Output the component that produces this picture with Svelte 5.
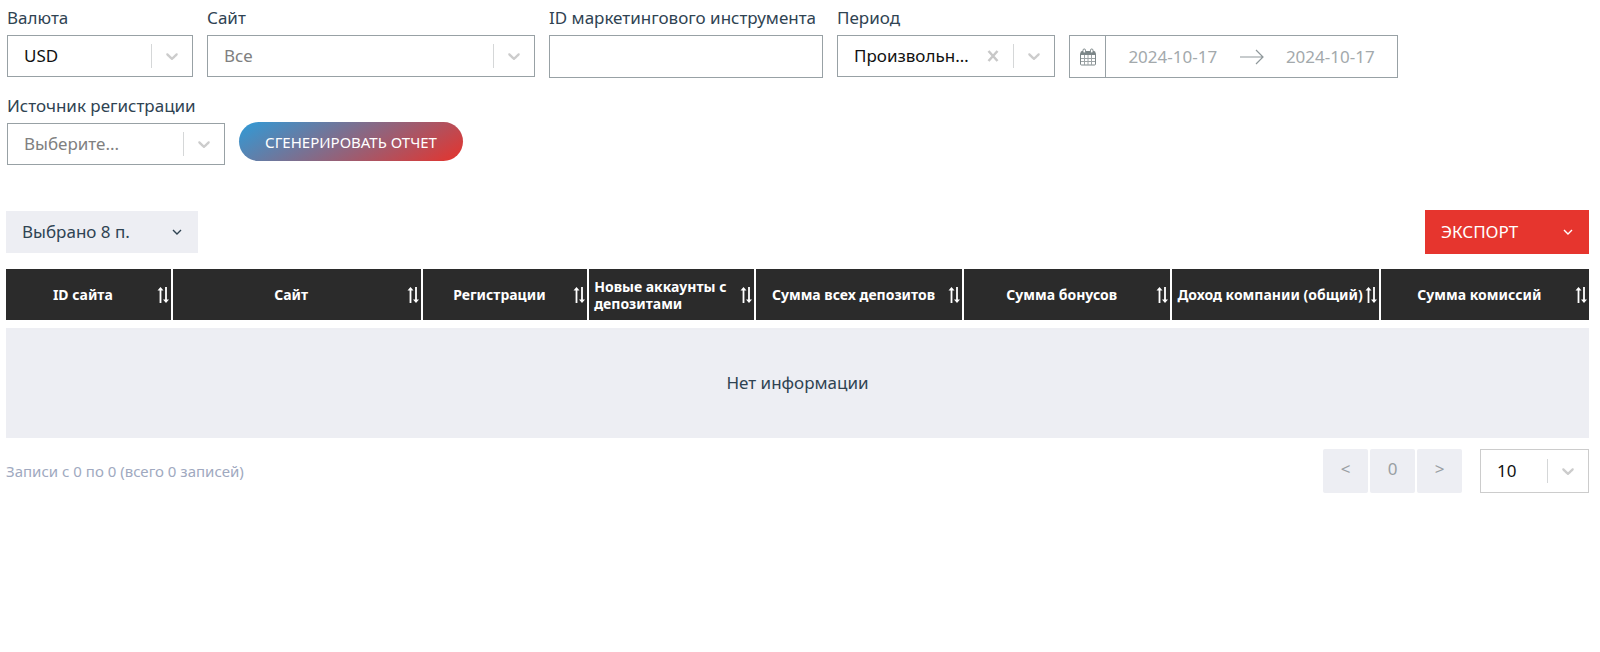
<script lang="ts">
	const columns = [
		{ title: 'ID сайта', span: 4 },
		{ title: 'Сайт', span: 6 },
		{ title: 'Регистрации', span: 4 },
		{ title: 'Новые аккаунты с депозитами', span: 4 },
		{ title: 'Сумма всех депозитов', span: 5 },
		{ title: 'Сумма бонусов', span: 5 },
		{ title: 'Доход компании (общий)', span: 5 },
		{ title: 'Сумма комиссий', span: 5 }
	];
	const total = columns.reduce((sum, column) => sum + column.span, 0);

	let period = $state('custom');
	let instrument = $state('');
	let dateFrom = $state('2024-10-17');
	let dateTo = $state('2024-10-17');
</script>

{#snippet indicator()}
	<span class="indicator">
		<svg width="20" height="20" viewBox="0 0 20 20" aria-hidden="true">
			<path
				d="M4.516 7.548c0.436-0.446 1.043-0.481 1.576 0l3.908 3.747 3.908-3.747c0.533-0.481 1.141-0.446 1.574 0 0.436 0.445 0.408 1.197 0 1.615-0.406 0.418-4.695 4.502-4.695 4.502-0.217 0.223-0.502 0.335-0.787 0.335s-0.57-0.112-0.789-0.335c0 0-4.287-4.084-4.695-4.502s-0.436-1.17 0-1.615z"
			/>
		</svg>
	</span>
{/snippet}

{#snippet arrow()}
	<svg width="10" height="8" viewBox="0 0 10 8" aria-hidden="true">
		<path d="M1 2l4 4 4-4" fill="none" stroke="currentColor" stroke-width="1.4" />
	</svg>
{/snippet}

<main>
	<form class="filters" onsubmit={(e) => e.preventDefault()}>
		<div class="field currency">
			<label for="currency">Валюта</label>
			<div class="select">
				<select id="currency">
					<option>USD</option>
				</select>
				{@render indicator()}
			</div>
		</div>

		<div class="field site">
			<label for="site">Сайт</label>
			<div class="select">
				<select id="site" class="empty">
					<option>Все</option>
				</select>
				{@render indicator()}
			</div>
		</div>

		<div class="field instrument">
			<label for="instrument">ID маркетингового инструмента</label>
			<input id="instrument" type="text" bind:value={instrument} />
		</div>

		<div class="field">
			<label for="period">Период</label>
			<div class="select clearable">
				<select id="period" bind:value={period}>
					<option value="">Выберите...</option>
					<option value="custom">Произвольный период</option>
				</select>
				<button type="button" class="clear" aria-label="Очистить" onclick={() => (period = '')}>
					<svg width="12" height="12" viewBox="0 0 12 12" aria-hidden="true">
						<path d="M1.5 1l9 10M10.5 1l-9 10" fill="none" stroke="#c8c8c8" stroke-width="2.5" />
					</svg>
				</button>
				{@render indicator()}
			</div>
		</div>

		<div class="dates">
			<button type="button" class="calendar" aria-label="Календарь">
				<svg width="16" height="18" viewBox="0 0 16 18" aria-hidden="true">
					<path d="M2 3h12a1.5 1.5 0 0 1 1.5 1.5V7H.5V4.5A1.5 1.5 0 0 1 2 3z" fill="#7d8789" />
					<rect x="0.5" y="5" width="15" height="12" rx="1" fill="none" stroke="#7d8789" />
					<path d="M4.5 7v10M8 7v10M11.5 7v10M1 10.5h14M1 13.5h14" stroke="#9da4a6" />
					<rect x="3" y="1" width="2.5" height="4" rx="1.2" fill="#fff" stroke="#7d8789" />
					<rect x="10.5" y="1" width="2.5" height="4" rx="1.2" fill="#fff" stroke="#7d8789" />
				</svg>
			</button>
			<input type="text" aria-label="Дата начала" bind:value={dateFrom} />
			<svg width="24" height="16" viewBox="0 0 24 16" aria-hidden="true">
				<path d="M0 8h23M16 1l7 7-7 7" fill="none" stroke="#8f989b" stroke-width="1.2" />
			</svg>
			<input type="text" aria-label="Дата окончания" bind:value={dateTo} />
		</div>

		<div class="field">
			<label for="source">Источник регистрации</label>
			<div class="select">
				<select id="source" class="empty">
					<option>Выберите...</option>
				</select>
				{@render indicator()}
			</div>
		</div>

		<button type="submit" class="generate">СГЕНЕРИРОВАТЬ ОТЧЕТ</button>
	</form>

	<div class="toolbar">
		<button type="button" class="columns">Выбрано 8 п. {@render arrow()}</button>
		<button type="button" class="export">ЭКСПОРТ {@render arrow()}</button>
	</div>

	<table>
		<colgroup>
			{#each columns as column}
				<col style="width: {(column.span / total) * 100}%" />
			{/each}
		</colgroup>
		<thead>
			<tr>
				{#each columns as column}
					<th>
						<div class="head">
							<span>{column.title}</span>
							<svg width="12" height="18" viewBox="0 0 12 18" aria-hidden="true">
								<path d="M3.5 17V3M9 1v14" stroke="#fff" stroke-width="1.8" />
								<path d="M3.5 1L.5 4.5h6zM9 17l-3-3.5h6z" fill="#fff" />
							</svg>
						</div>
					</th>
				{/each}
			</tr>
		</thead>
		<tbody>
			<tr>
				<td colspan={columns.length}>Нет информации</td>
			</tr>
		</tbody>
	</table>

	<footer>
		<p>Записи с 0 по 0 (всего 0 записей)</p>
		<nav aria-label="Страницы">
			<button type="button" disabled>&lt;</button>
			<button type="button" disabled>0</button>
			<button type="button" disabled>&gt;</button>
		</nav>
		<div class="select size">
			<select aria-label="Записей на странице">
				<option>10</option>
			</select>
			{@render indicator()}
		</div>
	</footer>
</main>

<style>
	:global(body) {
		background: #fff;
		color: #2f4352;
		font-family: 'Noto Sans', 'Open Sans', sans-serif;
		font-size: 17px;
		line-height: 24px;
	}

	main {
		padding: 6px 11px 6px 6px;
	}

	main :global(*) {
		box-sizing: border-box;
	}

	button,
	input,
	select {
		margin: 0;
		padding: 0;
		border: 0;
		border-radius: 0;
		background: none;
		color: inherit;
		font: inherit;
	}

	button {
		cursor: pointer;
	}

	svg {
		display: block;
		flex: none;
	}

	.filters {
		display: flex;
		flex-wrap: wrap;
		align-items: flex-start;
		gap: 16px 14px;
		padding-left: 1px;
	}

	.field {
		display: flex;
		flex-direction: column;
		gap: 5px;
		width: 218px;
	}

	.field.currency {
		width: 186px;
	}

	.field.site {
		width: 328px;
	}

	.field.instrument {
		width: 274px;
	}

	label {
		white-space: nowrap;
	}

	.field > input {
		height: 43px;
		padding: 0 16px;
		border: 1px solid #98a1a5;
	}

	.select {
		display: grid;
		grid-template-columns: 1fr auto auto;
		align-items: center;
		height: 42px;
		border: 1px solid #98a1a5;
	}

	/* the native control lies under the indicator so the whole box opens it */
	.select select {
		grid-area: 1 / 1 / 2 / 4;
		width: 100%;
		height: 100%;
		padding: 0 46px 0 16px;
		appearance: none;
		color: #111;
		text-overflow: ellipsis;
		white-space: nowrap;
		overflow: hidden;
	}

	.select select.empty {
		color: #808080;
	}

	.clearable select {
		padding-right: 76px;
	}

	.clear {
		grid-area: 1 / 2;
		padding: 8px 14px;
	}

	.indicator {
		grid-area: 1 / 3;
		display: flex;
		align-items: center;
		height: 24px;
		padding: 0 10px;
		border-left: 1px solid #d5d7d8;
		fill: #ccc;
		pointer-events: none;
	}

	.dates {
		display: flex;
		align-items: center;
		width: 329px;
		height: 43px;
		margin-top: 29px;
		border: 1px solid #98a1a5;
		color: #a3a9ac;
	}

	.dates input {
		flex: 1;
		min-width: 0;
		text-align: center;
	}

	.calendar {
		display: grid;
		place-items: center;
		width: 36px;
		height: 100%;
		border-right: 1px solid #98a1a5;
	}

	.generate {
		width: 224px;
		height: 39px;
		margin-top: 28px;
		border-radius: 20px;
		background: linear-gradient(150deg, #2f9bd8, #e6332c);
		color: #fff;
		font-size: 15px;
	}

	.toolbar {
		display: flex;
		justify-content: space-between;
		align-items: center;
		margin: 45px 0 15px;
	}

	.toolbar button {
		display: flex;
		justify-content: space-between;
		align-items: center;
		padding: 0 16px;
	}

	.columns {
		width: 192px;
		height: 42px;
		background: #edeef3;
	}

	.export {
		width: 164px;
		height: 44px;
		background: #e6352e;
		color: #fff;
	}

	table {
		width: 100%;
		border-collapse: separate;
		border-spacing: 0;
		table-layout: fixed;
	}

	th {
		height: 51px;
		padding: 0;
		border-right: 2px solid #fff;
		background: #2b2b2b;
		color: #fff;
		font-size: 14px;
		line-height: 17px;
		text-align: left;
	}

	th:last-child {
		border-right: 0;
	}

	.head {
		display: flex;
		align-items: center;
		gap: 2px;
		padding: 0 2px 0 5px;
	}

	.head span {
		display: flex;
		flex: 1;
		justify-content: center;
	}

	td {
		height: 118px;
		padding: 0;
		border-top: 8px solid #fff;
		background: #edeef3;
		text-align: center;
	}

	footer {
		display: flex;
		align-items: center;
		margin-top: 11px;
	}

	p {
		margin: 0 auto 0 0;
		color: #a0a9c0;
		font-size: 15px;
	}

	nav {
		display: flex;
		gap: 2px;
	}

	nav button {
		width: 45px;
		height: 44px;
		padding-bottom: 4px;
		border-radius: 2px;
		background: #edeef3;
		color: #999fa3;
		cursor: default;
	}

	.size {
		width: 109px;
		height: 44px;
		margin-left: 18px;
		border-color: #ccc;
	}
</style>
